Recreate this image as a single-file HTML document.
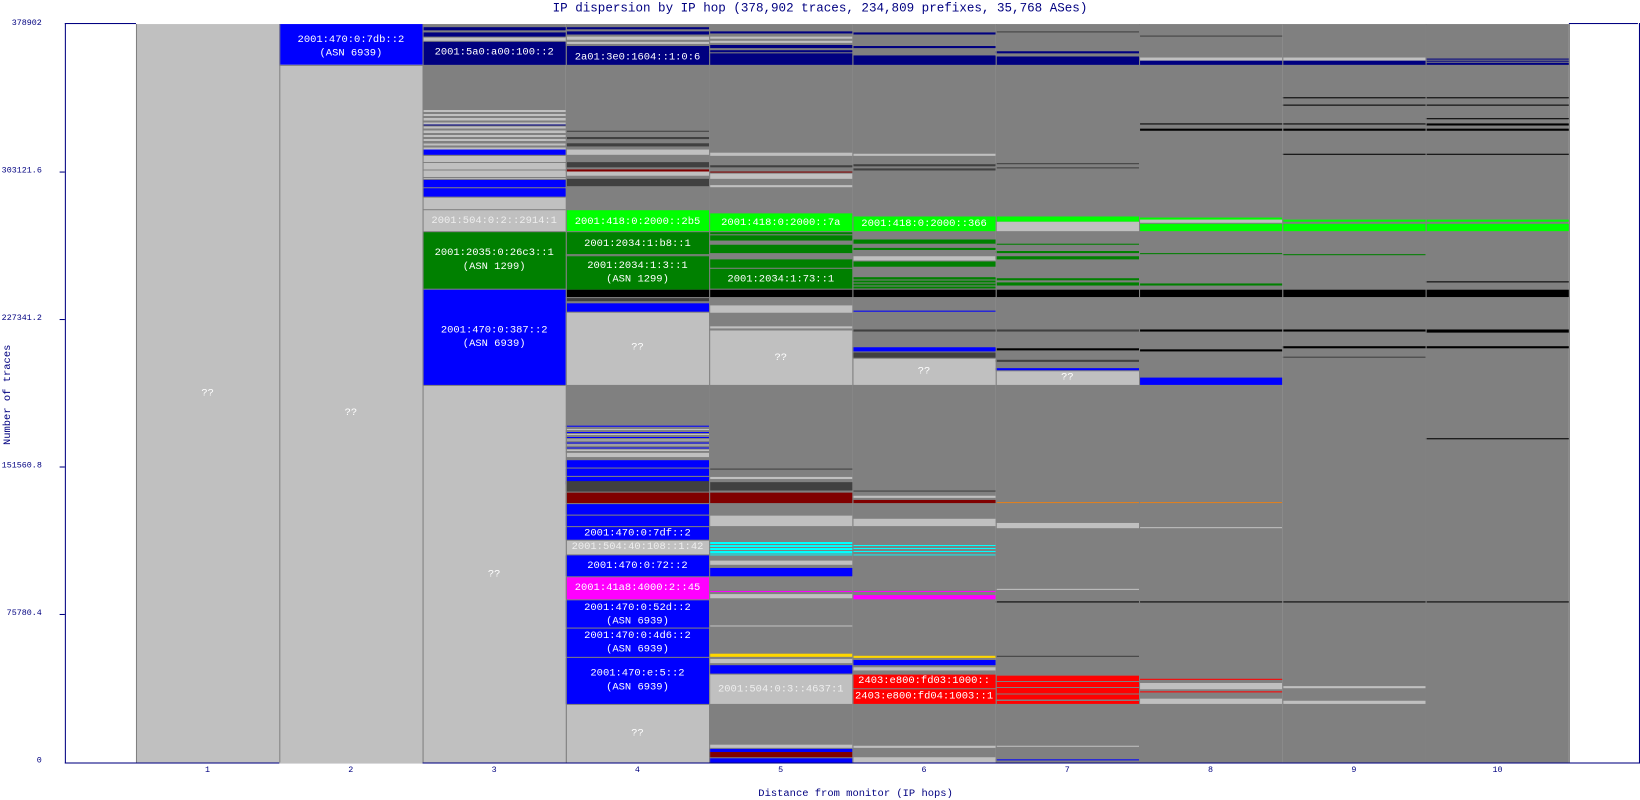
<!DOCTYPE html>
<html><head><meta charset="utf-8"><style>
body{margin:0;width:1640px;height:800px;background:#fff;position:relative;overflow:hidden;font-family:"Liberation Mono",monospace;}
#w{position:absolute;left:0;top:0;width:1568px;height:765px;transform:scale(1.04592);transform-origin:0 0;}
.r{position:absolute;}
.t{position:absolute;color:#fff;font-size:10px;text-align:center;line-height:13px;white-space:nowrap;}
.ax{position:absolute;color:#000080;font-size:8px;white-space:nowrap;}
</style></head><body><div id="w">
<div class="ax" style="left:0;width:1568px;top:1px;text-align:center;font-size:12px;">IP dispersion by IP hop (378,902 traces, 234,809 prefixes, 35,768 ASes)</div>
<div class="r" style="left:62px;top:22px;width:1504px;height:707px;border:1px solid #000080;border-top:none;"></div>
<div class="r" style="left:62px;top:22px;width:68px;height:1px;background:#000080"></div>
<div class="r" style="left:1500px;top:22px;width:66px;height:1px;background:#000080"></div>
<div class="ax" style="left:0;width:40px;text-align:right;top:18px">378902</div>
<div class="ax" style="left:0;width:40px;text-align:right;top:159px">303121.6</div>
<div class="ax" style="left:0;width:40px;text-align:right;top:300px">227341.2</div>
<div class="ax" style="left:0;width:40px;text-align:right;top:441px">151560.8</div>
<div class="ax" style="left:0;width:40px;text-align:right;top:582px">75780.4</div>
<div class="ax" style="left:0;width:40px;text-align:right;top:723px">0</div>
<div class="r" style="left:57px;top:164px;width:5px;height:1px;background:#000080"></div>
<div class="r" style="left:57px;top:305px;width:5px;height:1px;background:#000080"></div>
<div class="r" style="left:57px;top:446px;width:5px;height:1px;background:#000080"></div>
<div class="r" style="left:57px;top:587px;width:5px;height:1px;background:#000080"></div>
<div class="ax" style="left:-42px;top:372px;width:100px;text-align:center;transform:rotate(-90deg);font-size:10px">Number of traces</div>
<div class="ax" style="left:725px;top:754px;font-size:10px">Distance from monitor (IP hops)</div>
<div class="ax" style="left:196px;top:732px">1</div><div class="ax" style="left:333px;top:732px">2</div>
<div class="ax" style="left:470px;top:732px">3</div><div class="ax" style="left:607px;top:732px">4</div>
<div class="ax" style="left:744px;top:732px">5</div><div class="ax" style="left:881px;top:732px">6</div>
<div class="ax" style="left:1018px;top:732px">7</div><div class="ax" style="left:1155px;top:732px">8</div>
<div class="ax" style="left:1292px;top:732px">9</div><div class="ax" style="left:1427px;top:732px">10</div>

<div class="r" style="left:130px;top:23px;width:137px;height:706px;background:#c0c0c0"></div>
<div class="t" style="left:130px;width:137px;top:370px">??</div>
<div class="r" style="left:267px;top:23px;width:137px;height:39px;background:#0000ff"></div>
<div class="t" style="left:267px;width:137px;top:32px">2001:470:0:7db::2<br>(ASN 6939)</div>
<div class="r" style="left:267px;top:62px;width:137px;height:667px;background:#c0c0c0;border-top:1px solid #808080"></div>
<div class="t" style="left:267px;width:137px;top:389px">??</div>
<div class="r" style="left:404px;top:23px;width:137px;height:706px;background:#808080"></div>
<div class="r" style="left:404px;top:26px;width:137px;height:3px;background:#000080"></div>
<div class="r" style="left:404px;top:31px;width:137px;height:4px;background:#000080"></div>
<div class="r" style="left:404px;top:36px;width:137px;height:3px;background:#c0c0c0"></div>
<div class="r" style="left:404px;top:40px;width:137px;height:22px;background:#000080"></div>
<div class="t" style="left:404px;width:137px;top:44px">2001:5a0:a00:100::2</div>
<div class="r" style="left:404px;top:105px;width:137px;height:38px;background:repeating-linear-gradient(#c0c0c0 0 2px,#808080 2px 4px)"></div>
<div class="r" style="left:404px;top:119px;width:137px;height:1px;background:#000080"></div>
<div class="r" style="left:404px;top:143px;width:137px;height:5px;background:#0000ff"></div>
<div class="r" style="left:404px;top:149px;width:137px;height:22px;background:repeating-linear-gradient(#c0c0c0 0 6px,#808080 6px 7px)"></div>
<div class="r" style="left:404px;top:172px;width:137px;height:7px;background:#0000ff"></div>
<div class="r" style="left:404px;top:180px;width:137px;height:8px;background:#0000ff"></div>
<div class="r" style="left:404px;top:189px;width:137px;height:11px;background:#c0c0c0"></div>
<div class="r" style="left:404px;top:201px;width:137px;height:20px;background:#c0c0c0"></div>
<div class="t" style="left:404px;width:137px;top:205px;color:#eee">2001:504:0:2::2914:1</div>
<div class="r" style="left:404px;top:222px;width:137px;height:54px;background:#008000"></div>
<div class="t" style="left:404px;width:137px;top:236px">2001:2035:0:26c3::1<br>(ASN 1299)</div>
<div class="r" style="left:404px;top:277px;width:137px;height:91px;background:#0000ff"></div>
<div class="t" style="left:404px;width:137px;top:310px">2001:470:0:387::2<br>(ASN 6939)</div>
<div class="r" style="left:404px;top:369px;width:137px;height:360px;background:#c0c0c0"></div>
<div class="t" style="left:404px;width:137px;top:543px">??</div>
<div class="r" style="left:541px;top:23px;width:137px;height:706px;background:#808080"></div>
<div class="r" style="left:541px;top:26px;width:137px;height:2px;background:#000080"></div>
<div class="r" style="left:541px;top:30px;width:137px;height:3px;background:#000080"></div>
<div class="r" style="left:541px;top:35px;width:137px;height:3px;background:#c0c0c0"></div>
<div class="r" style="left:541px;top:40px;width:137px;height:2px;background:#c0c0c0"></div>
<div class="r" style="left:541px;top:44px;width:137px;height:18px;background:#000080"></div>
<div class="t" style="left:541px;width:137px;top:49px">2a01:3e0:1604::1:0:6</div>
<div class="r" style="left:541px;top:125px;width:137px;height:1px;background:#404040"></div>
<div class="r" style="left:541px;top:131px;width:137px;height:2px;background:#404040"></div>
<div class="r" style="left:541px;top:137px;width:137px;height:3px;background:#404040"></div>
<div class="r" style="left:541px;top:143px;width:137px;height:5px;background:#c0c0c0"></div>
<div class="r" style="left:541px;top:155px;width:137px;height:5px;background:#404040"></div>
<div class="r" style="left:541px;top:162px;width:137px;height:2px;background:#800000"></div>
<div class="r" style="left:541px;top:164px;width:137px;height:4px;background:#c0c0c0"></div>
<div class="r" style="left:541px;top:171px;width:137px;height:7px;background:#404040"></div>
<div class="r" style="left:541px;top:201px;width:137px;height:20px;background:#00ff00"></div>
<div class="t" style="left:541px;width:137px;top:206px">2001:418:0:2000::2b5</div>
<div class="r" style="left:541px;top:222px;width:137px;height:21px;background:#008000"></div>
<div class="t" style="left:541px;width:137px;top:227px">2001:2034:1:b8::1</div>
<div class="r" style="left:541px;top:244px;width:137px;height:32px;background:#008000;border-top:1px solid #808080"></div>
<div class="t" style="left:541px;width:137px;top:248px">2001:2034:1:3::1<br>(ASN 1299)</div>
<div class="r" style="left:541px;top:277px;width:137px;height:7px;background:#000"></div>
<div class="r" style="left:541px;top:285px;width:137px;height:3px;background:#404040"></div>
<div class="r" style="left:541px;top:290px;width:137px;height:8px;background:#0000ff"></div>
<div class="r" style="left:541px;top:299px;width:137px;height:69px;background:#c0c0c0"></div>
<div class="t" style="left:541px;width:137px;top:326px">??</div>
<div class="r" style="left:541px;top:407px;width:137px;height:1px;background:#0000ff"></div>
<div class="r" style="left:541px;top:410px;width:137px;height:22px;background:repeating-linear-gradient(#c0c0c0 0 1px,#808080 1px 3px,#0000ff 3px 4px,#808080 4px 5px)"></div>
<div class="r" style="left:541px;top:433px;width:137px;height:4px;background:#c0c0c0"></div>
<div class="r" style="left:541px;top:440px;width:137px;height:7px;background:#0000ff"></div>
<div class="r" style="left:541px;top:448px;width:137px;height:7px;background:#0000ff"></div>
<div class="r" style="left:541px;top:456px;width:137px;height:7px;background:#0000ff"></div>
<div class="r" style="left:541px;top:460px;width:137px;height:10px;background:#404040"></div>
<div class="r" style="left:541px;top:471px;width:137px;height:10px;background:#800000"></div>
<div class="r" style="left:541px;top:482px;width:137px;height:10px;background:#0000ff"></div>
<div class="r" style="left:541px;top:493px;width:137px;height:10px;background:#0000ff"></div>
<div class="r" style="left:541px;top:504px;width:137px;height:12px;background:#0000ff"></div>
<div class="t" style="left:541px;width:137px;top:504px">2001:470:0:7df::2</div>
<div class="r" style="left:541px;top:517px;width:137px;height:13px;background:#c0c0c0"></div>
<div class="t" style="left:541px;width:137px;top:517px;color:#eee">2001:504:40:108::1:42</div>
<div class="r" style="left:541px;top:531px;width:137px;height:20px;background:#0000ff"></div>
<div class="t" style="left:541px;width:137px;top:535px">2001:470:0:72::2</div>
<div class="r" style="left:541px;top:552px;width:137px;height:21px;background:#ff00ff"></div>
<div class="t" style="left:541px;width:137px;top:556px">2001:41a8:4000:2::45</div>
<div class="r" style="left:541px;top:574px;width:137px;height:26px;background:#0000ff"></div>
<div class="t" style="left:541px;width:137px;top:575px">2001:470:0:52d::2<br>(ASN 6939)</div>
<div class="r" style="left:541px;top:601px;width:137px;height:27px;background:#0000ff"></div>
<div class="t" style="left:541px;width:137px;top:602px">2001:470:0:4d6::2<br>(ASN 6939)</div>
<div class="r" style="left:541px;top:629px;width:137px;height:44px;background:#0000ff"></div>
<div class="t" style="left:541px;width:137px;top:638px">2001:470:e:5::2<br>(ASN 6939)</div>
<div class="r" style="left:541px;top:674px;width:137px;height:55px;background:#c0c0c0"></div>
<div class="t" style="left:541px;width:137px;top:695px">??</div>
<div class="r" style="left:678px;top:23px;width:137px;height:706px;background:#808080"></div>
<div class="r" style="left:678px;top:30px;width:137px;height:2px;background:#000080"></div>
<div class="r" style="left:678px;top:35px;width:137px;height:2px;background:#c0c0c0"></div>
<div class="r" style="left:678px;top:39px;width:137px;height:2px;background:#c0c0c0"></div>
<div class="r" style="left:678px;top:43px;width:137px;height:3px;background:#000080"></div>
<div class="r" style="left:678px;top:48px;width:137px;height:2px;background:#000080"></div>
<div class="r" style="left:678px;top:51px;width:137px;height:11px;background:#000080"></div>
<div class="r" style="left:678px;top:146px;width:137px;height:3px;background:#c0c0c0"></div>
<div class="r" style="left:678px;top:158px;width:137px;height:2px;background:#404040"></div>
<div class="r" style="left:678px;top:164px;width:137px;height:1px;background:#800000"></div>
<div class="r" style="left:678px;top:166px;width:137px;height:5px;background:#c0c0c0"></div>
<div class="r" style="left:678px;top:177px;width:137px;height:2px;background:#c0c0c0"></div>
<div class="r" style="left:678px;top:204px;width:137px;height:17px;background:#00ff00"></div>
<div class="t" style="left:678px;width:137px;top:207px">2001:418:0:2000::7a</div>
<div class="r" style="left:678px;top:222px;width:137px;height:54px;background:#008000"></div>
<div class="r" style="left:678px;top:224px;width:137px;height:1px;background:#808080"></div>
<div class="r" style="left:678px;top:230px;width:137px;height:4px;background:#808080"></div>
<div class="r" style="left:678px;top:242px;width:137px;height:6px;background:#808080"></div>
<div class="r" style="left:678px;top:256px;width:137px;height:1px;background:#808080"></div>
<div class="t" style="left:678px;width:137px;top:261px">2001:2034:1:73::1</div>
<div class="r" style="left:678px;top:277px;width:137px;height:7px;background:#000"></div>
<div class="r" style="left:678px;top:292px;width:137px;height:7px;background:#c0c0c0"></div>
<div class="r" style="left:678px;top:312px;width:137px;height:2px;background:#c0c0c0"></div>
<div class="r" style="left:678px;top:316px;width:137px;height:52px;background:#c0c0c0"></div>
<div class="t" style="left:678px;width:137px;top:336px">??</div>
<div class="r" style="left:678px;top:448px;width:137px;height:1px;background:#404040"></div>
<div class="r" style="left:678px;top:456px;width:137px;height:2px;background:#c0c0c0"></div>
<div class="r" style="left:678px;top:461px;width:137px;height:8px;background:#404040"></div>
<div class="r" style="left:678px;top:471px;width:137px;height:10px;background:#800000"></div>
<div class="r" style="left:678px;top:493px;width:137px;height:10px;background:#c0c0c0"></div>
<div class="r" style="left:678px;top:518px;width:137px;height:13px;background:repeating-linear-gradient(#00ffff 0 2px,#808080 2px 3px)"></div>
<div class="r" style="left:678px;top:536px;width:137px;height:4px;background:#c0c0c0"></div>
<div class="r" style="left:678px;top:543px;width:137px;height:8px;background:#0000ff"></div>
<div class="r" style="left:678px;top:565px;width:137px;height:1px;background:#ff00ff"></div>
<div class="r" style="left:678px;top:568px;width:137px;height:4px;background:#c0c0c0"></div>
<div class="r" style="left:678px;top:598px;width:137px;height:1px;background:#c0c0c0"></div>
<div class="r" style="left:678px;top:625px;width:137px;height:3px;background:#ffd700"></div>
<div class="r" style="left:678px;top:630px;width:137px;height:4px;background:#c0c0c0"></div>
<div class="r" style="left:678px;top:636px;width:137px;height:8px;background:#0000ff"></div>
<div class="r" style="left:678px;top:645px;width:137px;height:28px;background:#c0c0c0"></div>
<div class="t" style="left:678px;width:137px;top:653px;color:#eee">2001:504:0:3::4637:1</div>
<div class="r" style="left:678px;top:712px;width:137px;height:3px;background:#c0c0c0"></div>
<div class="r" style="left:678px;top:716px;width:137px;height:3px;background:#0000ff"></div>
<div class="r" style="left:678px;top:719px;width:137px;height:5px;background:#800000"></div>
<div class="r" style="left:678px;top:725px;width:137px;height:4px;background:#0000ff"></div>
<div class="r" style="left:815px;top:23px;width:137px;height:706px;background:#808080"></div>
<div class="r" style="left:815px;top:31px;width:137px;height:2px;background:#000080"></div>
<div class="r" style="left:815px;top:44px;width:137px;height:2px;background:#000080"></div>
<div class="r" style="left:815px;top:53px;width:137px;height:9px;background:#000080"></div>
<div class="r" style="left:815px;top:147px;width:137px;height:2px;background:#c0c0c0"></div>
<div class="r" style="left:815px;top:157px;width:137px;height:2px;background:#404040"></div>
<div class="r" style="left:815px;top:161px;width:137px;height:2px;background:#404040"></div>
<div class="r" style="left:815px;top:207px;width:137px;height:14px;background:#00ff00"></div>
<div class="t" style="left:815px;width:137px;top:208px">2001:418:0:2000::366</div>
<div class="r" style="left:815px;top:229px;width:137px;height:4px;background:#008000"></div>
<div class="r" style="left:815px;top:237px;width:137px;height:2px;background:#008000"></div>
<div class="r" style="left:815px;top:245px;width:137px;height:4px;background:#c0c0c0"></div>
<div class="r" style="left:815px;top:250px;width:137px;height:5px;background:#008000"></div>
<div class="r" style="left:815px;top:265px;width:137px;height:11px;background:repeating-linear-gradient(#008000 0 2px,#808080 2px 3px)"></div>
<div class="r" style="left:815px;top:277px;width:137px;height:7px;background:#000"></div>
<div class="r" style="left:815px;top:297px;width:137px;height:1px;background:#0000ff"></div>
<div class="r" style="left:815px;top:315px;width:137px;height:2px;background:#404040"></div>
<div class="r" style="left:815px;top:332px;width:137px;height:4px;background:#0000ff"></div>
<div class="r" style="left:815px;top:337px;width:137px;height:5px;background:#404040"></div>
<div class="r" style="left:815px;top:343px;width:137px;height:25px;background:#c0c0c0"></div>
<div class="t" style="left:815px;width:137px;top:349px">??</div>
<div class="r" style="left:815px;top:469px;width:137px;height:1px;background:#404040"></div>
<div class="r" style="left:815px;top:474px;width:137px;height:2px;background:#c0c0c0"></div>
<div class="r" style="left:815px;top:478px;width:137px;height:3px;background:#800000"></div>
<div class="r" style="left:815px;top:496px;width:137px;height:7px;background:#c0c0c0"></div>
<div class="r" style="left:815px;top:521px;width:137px;height:10px;background:repeating-linear-gradient(#00ffff 0 1px,#808080 1px 3px)"></div>
<div class="r" style="left:815px;top:565px;width:137px;height:1px;background:#ff00ff"></div>
<div class="r" style="left:815px;top:569px;width:137px;height:4px;background:#ff00ff"></div>
<div class="r" style="left:815px;top:627px;width:137px;height:2px;background:#ffd700"></div>
<div class="r" style="left:815px;top:631px;width:137px;height:5px;background:#0000ff"></div>
<div class="r" style="left:815px;top:638px;width:137px;height:3px;background:#c0c0c0"></div>
<div class="r" style="left:815px;top:645px;width:137px;height:13px;background:#ff0000"></div>
<div class="t" style="left:815px;width:137px;top:645px">2403:e800:fd03:1000::</div>
<div class="r" style="left:815px;top:659px;width:137px;height:14px;background:#ff0000"></div>
<div class="t" style="left:815px;width:137px;top:660px">2403:e800:fd04:1003::1</div>
<div class="r" style="left:815px;top:713px;width:137px;height:2px;background:#c0c0c0"></div>
<div class="r" style="left:815px;top:724px;width:137px;height:5px;background:#c0c0c0"></div>
<div class="r" style="left:952px;top:23px;width:137px;height:706px;background:#808080"></div>
<div class="r" style="left:952px;top:30px;width:137px;height:1px;background:#404040"></div>
<div class="r" style="left:952px;top:49px;width:137px;height:2px;background:#000080"></div>
<div class="r" style="left:952px;top:54px;width:137px;height:8px;background:#000080"></div>
<div class="r" style="left:952px;top:156px;width:137px;height:1px;background:#404040"></div>
<div class="r" style="left:952px;top:160px;width:137px;height:1px;background:#404040"></div>
<div class="r" style="left:952px;top:207px;width:137px;height:5px;background:#00ff00"></div>
<div class="r" style="left:952px;top:212px;width:137px;height:9px;background:#c0c0c0"></div>
<div class="r" style="left:952px;top:233px;width:137px;height:1px;background:#008000"></div>
<div class="r" style="left:952px;top:240px;width:137px;height:2px;background:#008000"></div>
<div class="r" style="left:952px;top:245px;width:137px;height:3px;background:#008000"></div>
<div class="r" style="left:952px;top:266px;width:137px;height:2px;background:#008000"></div>
<div class="r" style="left:952px;top:270px;width:137px;height:3px;background:#008000"></div>
<div class="r" style="left:952px;top:277px;width:137px;height:7px;background:#000"></div>
<div class="r" style="left:952px;top:315px;width:137px;height:2px;background:#404040"></div>
<div class="r" style="left:952px;top:333px;width:137px;height:2px;background:#000"></div>
<div class="r" style="left:952px;top:344px;width:137px;height:2px;background:#404040"></div>
<div class="r" style="left:952px;top:352px;width:137px;height:2px;background:#0000ff"></div>
<div class="r" style="left:952px;top:355px;width:137px;height:13px;background:#c0c0c0"></div>
<div class="t" style="left:952px;width:137px;top:355px">??</div>
<div class="r" style="left:952px;top:480px;width:137px;height:1px;background:#e08020"></div>
<div class="r" style="left:952px;top:500px;width:137px;height:5px;background:#c0c0c0"></div>
<div class="r" style="left:952px;top:563px;width:137px;height:1px;background:#c0c0c0"></div>
<div class="r" style="left:952px;top:575px;width:137px;height:1px;background:#000"></div>
<div class="r" style="left:952px;top:627px;width:137px;height:1px;background:#404040"></div>
<div class="r" style="left:952px;top:646px;width:137px;height:27px;background:repeating-linear-gradient(#ff0000 0 5px,#808080 5px 6px)"></div>
<div class="r" style="left:952px;top:713px;width:137px;height:1px;background:#c0c0c0"></div>
<div class="r" style="left:952px;top:726px;width:137px;height:1px;background:#0000ff"></div>
<div class="r" style="left:1089px;top:23px;width:137px;height:706px;background:#808080"></div>
<div class="r" style="left:1089px;top:34px;width:137px;height:1px;background:#404040"></div>
<div class="r" style="left:1089px;top:55px;width:137px;height:3px;background:#c0c0c0"></div>
<div class="r" style="left:1089px;top:58px;width:137px;height:4px;background:#000080"></div>
<div class="r" style="left:1089px;top:118px;width:137px;height:1px;background:#000"></div>
<div class="r" style="left:1089px;top:123px;width:137px;height:2px;background:#000"></div>
<div class="r" style="left:1089px;top:208px;width:137px;height:2px;background:#00ff00"></div>
<div class="r" style="left:1089px;top:210px;width:137px;height:3px;background:#c0c0c0"></div>
<div class="r" style="left:1089px;top:214px;width:137px;height:7px;background:#00ff00"></div>
<div class="r" style="left:1089px;top:242px;width:137px;height:1px;background:#008000"></div>
<div class="r" style="left:1089px;top:271px;width:137px;height:2px;background:#008000"></div>
<div class="r" style="left:1089px;top:277px;width:137px;height:7px;background:#000"></div>
<div class="r" style="left:1089px;top:315px;width:137px;height:2px;background:#000"></div>
<div class="r" style="left:1089px;top:334px;width:137px;height:2px;background:#000"></div>
<div class="r" style="left:1089px;top:361px;width:137px;height:7px;background:#0000ff"></div>
<div class="r" style="left:1089px;top:480px;width:137px;height:1px;background:#e08020"></div>
<div class="r" style="left:1089px;top:504px;width:137px;height:1px;background:#c0c0c0"></div>
<div class="r" style="left:1089px;top:575px;width:137px;height:1px;background:#000"></div>
<div class="r" style="left:1089px;top:649px;width:137px;height:1px;background:#ff0000"></div>
<div class="r" style="left:1089px;top:653px;width:137px;height:6px;background:#c0c0c0"></div>
<div class="r" style="left:1089px;top:661px;width:137px;height:1px;background:#ff0000"></div>
<div class="r" style="left:1089px;top:668px;width:137px;height:5px;background:#c0c0c0"></div>
<div class="r" style="left:1226px;top:23px;width:137px;height:706px;background:#808080"></div>
<div class="r" style="left:1226px;top:55px;width:137px;height:3px;background:#c0c0c0"></div>
<div class="r" style="left:1226px;top:58px;width:137px;height:4px;background:#000080"></div>
<div class="r" style="left:1226px;top:93px;width:137px;height:1px;background:#000"></div>
<div class="r" style="left:1226px;top:100px;width:137px;height:1px;background:#000"></div>
<div class="r" style="left:1226px;top:118px;width:137px;height:1px;background:#000"></div>
<div class="r" style="left:1226px;top:123px;width:137px;height:2px;background:#000"></div>
<div class="r" style="left:1226px;top:147px;width:137px;height:1px;background:#000"></div>
<div class="r" style="left:1226px;top:210px;width:137px;height:2px;background:#00ff00"></div>
<div class="r" style="left:1226px;top:214px;width:137px;height:7px;background:#00ff00"></div>
<div class="r" style="left:1226px;top:243px;width:137px;height:1px;background:#008000"></div>
<div class="r" style="left:1226px;top:277px;width:137px;height:7px;background:#000"></div>
<div class="r" style="left:1226px;top:315px;width:137px;height:2px;background:#000"></div>
<div class="r" style="left:1226px;top:331px;width:137px;height:2px;background:#000"></div>
<div class="r" style="left:1226px;top:341px;width:137px;height:1px;background:#404040"></div>
<div class="r" style="left:1226px;top:575px;width:137px;height:1px;background:#000"></div>
<div class="r" style="left:1226px;top:656px;width:137px;height:2px;background:#c0c0c0"></div>
<div class="r" style="left:1226px;top:670px;width:137px;height:3px;background:#c0c0c0"></div>
<div class="r" style="left:1363px;top:23px;width:137px;height:706px;background:#808080"></div>
<div class="r" style="left:1363px;top:56px;width:137px;height:1px;background:#000080"></div>
<div class="r" style="left:1363px;top:58px;width:137px;height:1px;background:#000080"></div>
<div class="r" style="left:1363px;top:60px;width:137px;height:2px;background:#000080"></div>
<div class="r" style="left:1363px;top:93px;width:137px;height:1px;background:#000"></div>
<div class="r" style="left:1363px;top:100px;width:137px;height:1px;background:#000"></div>
<div class="r" style="left:1363px;top:113px;width:137px;height:1px;background:#000"></div>
<div class="r" style="left:1363px;top:118px;width:137px;height:2px;background:#000"></div>
<div class="r" style="left:1363px;top:123px;width:137px;height:2px;background:#000"></div>
<div class="r" style="left:1363px;top:147px;width:137px;height:1px;background:#000"></div>
<div class="r" style="left:1363px;top:210px;width:137px;height:2px;background:#00ff00"></div>
<div class="r" style="left:1363px;top:214px;width:137px;height:7px;background:#00ff00"></div>
<div class="r" style="left:1363px;top:269px;width:137px;height:1px;background:#000"></div>
<div class="r" style="left:1363px;top:277px;width:137px;height:7px;background:#000"></div>
<div class="r" style="left:1363px;top:315px;width:137px;height:3px;background:#000"></div>
<div class="r" style="left:1363px;top:331px;width:137px;height:2px;background:#000"></div>
<div class="r" style="left:1363px;top:419px;width:137px;height:1px;background:#000"></div>
<div class="r" style="left:1363px;top:575px;width:137px;height:1px;background:#000"></div>
<div class="r" style="left:130px;top:23px;width:1px;height:706px;background:#808080"></div>
<div class="r" style="left:267px;top:23px;width:1px;height:706px;background:#808080"></div>
<div class="r" style="left:404px;top:23px;width:1px;height:706px;background:#808080"></div>
<div class="r" style="left:541px;top:23px;width:1px;height:706px;background:#808080"></div>
<div class="r" style="left:678px;top:23px;width:1px;height:706px;background:#808080"></div>
<div class="r" style="left:815px;top:23px;width:1px;height:706px;background:#808080"></div>
<div class="r" style="left:952px;top:23px;width:1px;height:706px;background:#808080"></div>
<div class="r" style="left:1089px;top:23px;width:1px;height:706px;background:#808080"></div>
<div class="r" style="left:1226px;top:23px;width:1px;height:706px;background:#808080"></div>
<div class="r" style="left:1363px;top:23px;width:1px;height:706px;background:#808080"></div>
<div class="r" style="left:1500px;top:23px;width:1px;height:706px;background:#808080"></div>
</div></body></html>
